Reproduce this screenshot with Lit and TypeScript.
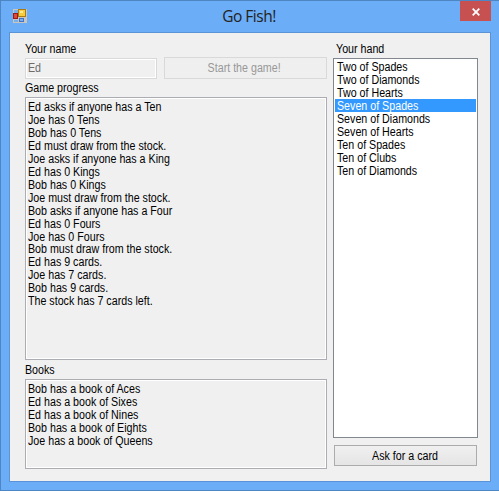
import { LitElement, html, css, svg } from "lit";
import { customElement, property, state } from "lit/decorators.js";
import { classMap } from "lit/directives/class-map.js";

const PROGRESS = [
  "Ed asks if anyone has a Ten",
  "Joe has 0 Tens",
  "Bob has 0 Tens",
  "Ed must draw from the stock.",
  "Joe asks if anyone has a King",
  "Ed has 0 Kings",
  "Bob has 0 Kings",
  "Joe must draw from the stock.",
  "Bob asks if anyone has a Four",
  "Ed has 0 Fours",
  "Joe has 0 Fours",
  "Bob must draw from the stock.",
  "Ed has 9 cards.",
  "Joe has 7 cards.",
  "Bob has 9 cards.",
  "The stock has 7 cards left.",
];
const BOOKS = [
  "Bob has a book of Aces",
  "Ed has a book of Sixes",
  "Ed has a book of Nines",
  "Bob has a book of Eights",
  "Joe has a book of Queens",
];
const HAND = [
  "Two of Spades",
  "Two of Diamonds",
  "Two of Hearts",
  "Seven of Spades",
  "Seven of Diamonds",
  "Seven of Hearts",
  "Ten of Spades",
  "Ten of Clubs",
  "Ten of Diamonds",
];

const condensed = css`
  .t { display: inline-block; transform: scaleX(0.89); transform-origin: 0 50%; white-space: pre; }
`;

@customElement("log-box")
export class LogBox extends LitElement {
  static styles = [condensed, css`
    :host {
      display: block;
      box-sizing: border-box;
      border: 1px solid #abadb3;
      box-shadow: inset 0 0 0 1px #fff;
      background: #f0f0f0;
      padding: 3px 2px;
      overflow: hidden;
    }
    .line { height: 13px; line-height: 13px; }
    .tight { height: 12px; line-height: 11px; }
  `];
  @property({ attribute: false }) lines: string[] = [];
  @property({ type: Number }) tight = -1;
  render() {
    return this.lines.map(
      (l, i) => html`<div class=${classMap({ line: true, tight: i === this.tight })}><span class="t">${l}</span></div>`
    );
  }
}

@customElement("app-root")
export class AppRoot extends LitElement {
  static styles = [condensed, css`
    :host {
      display: block;
      width: 499px;
      height: 491px;
      font: 12px "Liberation Sans", Arial, sans-serif;
      color: #000;
    }
    * { box-sizing: border-box; }
    .window {
      display: flex;
      flex-direction: column;
      width: 499px;
      height: 491px;
      background: #6badf6;
      border: 1px solid #4e86c3;
      border-right: 0;
      padding: 0 8px 8px;
    }
    .titlebar {
      display: grid;
      grid-template-columns: 60px 1fr 60px;
      height: 31px;
      flex: none;
    }
    .icon { display: block; margin: 8px 0 0 4px; }
    .title {
      font: 15.5px/31px "Open Sans", "Noto Sans", sans-serif;
      color: #222;
      text-align: center;
      letter-spacing: -0.5px;
      padding-right: 2px;
    }
    .close {
      justify-self: end;
      width: 31px;
      height: 20px;
      padding: 0;
      border: 0;
      background: #c75050;
      display: flex;
      align-items: center;
      justify-content: center;
    }
    .cross { display: block; margin-top: 1px; }
    .client {
      flex: 1;
      display: grid;
      grid-template-columns: 302px 145px;
      column-gap: 6px;
      padding: 8px 12px 11px 15px;
      background: #f0f0f0;
      border: 1px solid #5a94d6;
    }
    .left, .right { display: flex; flex-direction: column; }
    .label { height: 17px; line-height: 16px; }
    .label.hand { padding-left: 3px; }
    .label.books-label { height: 19px; line-height: 20px; }
    .row { display: flex; gap: 7px; align-items: flex-end; height: 22px; margin-top: -1px; margin-bottom: 1px; }
    .name {
      width: 132px;
      height: 21px;
      border: 1px solid #d9d9d9;
      box-shadow: inset 0 0 0 1px #fff;
      color: #6d6d6d;
      line-height: 19px;
      padding-left: 2px;
    }
    .button { font: inherit; padding: 0; border-radius: 0; text-align: center; }
    .button .t { transform-origin: 50% 50%; }
    .start { width: 163px; height: 22px; border: 1px solid #d9d9d9; background: #efefef; color: #989898; }
    .start .t { padding-right: 2px; }
    .ask {
      width: 143px;
      height: 21px;
      margin: 7px 0 0 1px;
      border: 1px solid #acacac;
      background: linear-gradient(#f0f0f0, #e5e5e5);
      color: #000;
    }
    .progress { height: 263px; }
    .books { height: 90px; }
    .list { height: 380px; background: #fff; border: 1px solid #828790; padding: 1px; }
    .item { height: 13px; line-height: 14px; padding-left: 2px; }
    .selected { background: #3399ff; color: #fff; }
  `];

  @state() private selected = 3;

  render() {
    return html`
      <div class="window">
        <div class="titlebar">
          <svg class="icon" width="14" height="14" viewBox="0 0 14 14" shape-rendering="crispEdges">
            ${svg`
            <rect width="14" height="14" fill="#c9c6c0"/>
            <rect x="1" y="1" width="4" height="3" fill="#79aee8"/>
            <rect x="1" y="11" width="4" height="2" fill="#79aee8"/>
            <rect x="0" y="4" width="5" height="6" fill="#9c1a14"/>
            <rect x="1" y="5" width="3" height="4" fill="#df4a36"/>
            <rect x="5" y="0" width="8" height="8" fill="#a87b14"/>
            <rect x="6" y="1" width="6" height="6" fill="#f7cd3c"/>
            <rect x="7" y="2" width="3" height="2" fill="#fdea9a"/>
            <rect x="6" y="9" width="5" height="4" fill="#3f74cb"/>
            <rect x="7" y="10" width="3" height="2" fill="#7db0f2"/>`}
          </svg>
          <div class="title">Go Fish!</div>
          <button class="close" aria-label="Close">
            <svg class="cross" width="8" height="8" viewBox="0 0 8 8"><path d="M.7.7 7.3 7.3M7.3.7.7 7.3" stroke="#fff" stroke-width="1.8"/></svg>
          </button>
        </div>
        <div class="client">
          <div class="left">
            <div class="label"><span class="t">Your name</span></div>
            <div class="row">
              <div class="name"><span class="t">Ed</span></div>
              <button class="button start" disabled><span class="t">Start the game!</span></button>
            </div>
            <div class="label"><span class="t">Game progress</span></div>
            <log-box class="progress" .lines=${PROGRESS} tight="11"></log-box>
            <div class="label books-label"><span class="t">Books</span></div>
            <log-box class="books" .lines=${BOOKS}></log-box>
          </div>
          <div class="right">
            <div class="label hand"><span class="t">Your hand</span></div>
            <div class="list">
              ${HAND.map(
                (c, i) => html`<div
                  class=${classMap({ item: true, selected: i === this.selected })}
                  @click=${() => (this.selected = i)}
                ><span class="t">${c}</span></div>`
              )}
            </div>
            <button class="button ask"><span class="t">Ask for a card</span></button>
          </div>
        </div>
      </div>
    `;
  }
}
